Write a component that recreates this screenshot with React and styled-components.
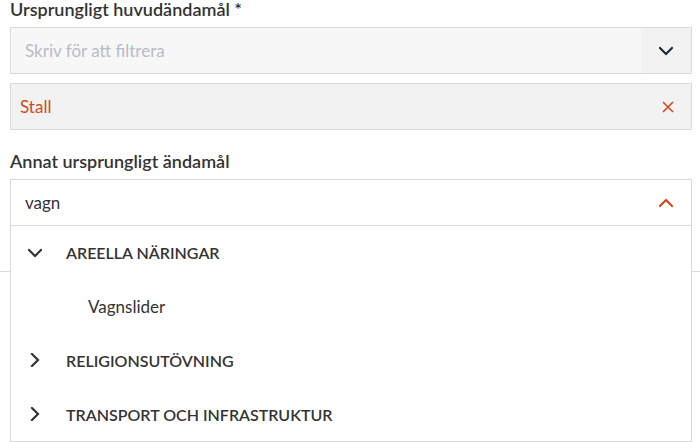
import React from "react";
import styled, { createGlobalStyle } from "styled-components";

const GlobalStyle = createGlobalStyle`
  html, body {
    margin: 0;
    height: 100%;
  }
  body {
    background: #fff;
    font-family: Lato, "Noto Sans", sans-serif;
    color: #333;
  }
`;

const Chevron = ({ dir = "down", color = "#333", size = 14 }) => {
  const points = {
    down: "1,4 7,10 13,4",
    up: "1,10 7,4 13,10",
    right: "4,1 10,7 4,13",
  }[dir];
  return (
    <svg width={size} height={size} viewBox="0 0 14 14">
      <polyline
        points={points}
        fill="none"
        stroke={color}
        strokeWidth="2.2"
        strokeLinecap="square"
      />
    </svg>
  );
};

const Cross = ({ color }) => (
  <svg width="12" height="12" viewBox="0 0 12 12">
    <path d="M1 1 L11 11 M11 1 L1 11" stroke={color} strokeWidth="1.6" fill="none" />
  </svg>
);

const Page = () => {
  const groups = [
    { name: "AREELLA NÄRINGAR", open: true, items: ["Vagnslider"] },
    { name: "RELIGIONSUTÖVNING", open: false, items: [] },
    { name: "TRANSPORT OCH INFRASTRUKTUR", open: false, items: [] },
  ];

  return (
    <Wrapper>
      <GlobalStyle />
      <Form>
        <Label>Ursprungligt huvudändamål *</Label>
        <Select $muted>
          <Field $placeholder>Skriv för att filtrera</Field>
          <Toggle $shaded>
            <Chevron dir="down" color="#1c2b3c" />
          </Toggle>
        </Select>
        <Chip>
          <span>Stall</span>
          <Toggle>
            <Cross color="#d2491c" />
          </Toggle>
        </Chip>

        <Label $spaced>Annat ursprungligt ändamål</Label>
        <Combo>
          <Select>
            <Field>vagn</Field>
            <Toggle>
              <Chevron dir="up" color="#d2491c" />
            </Toggle>
          </Select>
          <Menu>
            {groups.map((g) => (
              <React.Fragment key={g.name}>
                <Row>
                  <IconSlot>
                    <Chevron dir={g.open ? "down" : "right"} color="#333" />
                  </IconSlot>
                  <GroupName>{g.name}</GroupName>
                </Row>
                {g.open &&
                  g.items.map((item) => (
                    <Row key={item} $child>
                      {item}
                    </Row>
                  ))}
              </React.Fragment>
            ))}
          </Menu>
        </Combo>
      </Form>
      <Divider />
    </Wrapper>
  );
};

const Wrapper = styled.div`
  margin-top: -3px;
  min-height: 445px;
`;

const Form = styled.div`
  padding: 0 8px 0 10px;
`;

const Label = styled.div`
  font-size: 18px;
  font-weight: 600;
  line-height: 24px;
  color: #333;
  margin: ${(p) => (p.$spaced ? "19px" : "0")} 0 6px;
`;

const Select = styled.div`
  display: flex;
  align-items: stretch;
  height: 45px;
  border: 1px solid #d9d9d9;
  background: ${(p) => (p.$muted ? "#f7f7f7" : "#fff")};
`;

const Field = styled.div`
  flex: 1;
  display: flex;
  align-items: center;
  padding-left: 14px;
  font-size: 17px;
  color: ${(p) => (p.$placeholder ? "#b8bcc6" : "#333")};
`;

const Toggle = styled.div`
  width: 50px;
  display: flex;
  align-items: center;
  justify-content: center;
  background: ${(p) => (p.$shaded ? "#f2f2f2" : "transparent")};
`;

const Chip = styled.div`
  display: flex;
  align-items: center;
  justify-content: space-between;
  height: 45px;
  margin-top: 9px;
  padding-left: 9px;
  border: 1px solid #d9d9d9;
  background: #f2f2f2;
  color: #d2491c;
  font-size: 17px;

  ${Toggle} {
    align-self: stretch;
    width: 46px;
  }
`;

const Combo = styled.div`
  position: relative;
`;

const Menu = styled.div`
  position: absolute;
  top: 100%;
  left: 0;
  right: 0;
  z-index: 2;
  background: #fff;
  border: 1px solid #d9d9d9;
  border-top: none;
`;

const Row = styled.div`
  display: flex;
  align-items: center;
  height: 53.75px;
  padding-left: ${(p) => (p.$child ? "77px" : "17px")};
  font-size: 17px;
  color: #333;
`;

const IconSlot = styled.span`
  display: flex;
  width: 14px;
  margin-right: 24px;
`;

const GroupName = styled.span`
  font-size: 16px;
  font-weight: 600;
`;

const Divider = styled.div`
  margin-top: 45px;
  border-top: 1px solid #dcdcdc;
`;

export default Page;
